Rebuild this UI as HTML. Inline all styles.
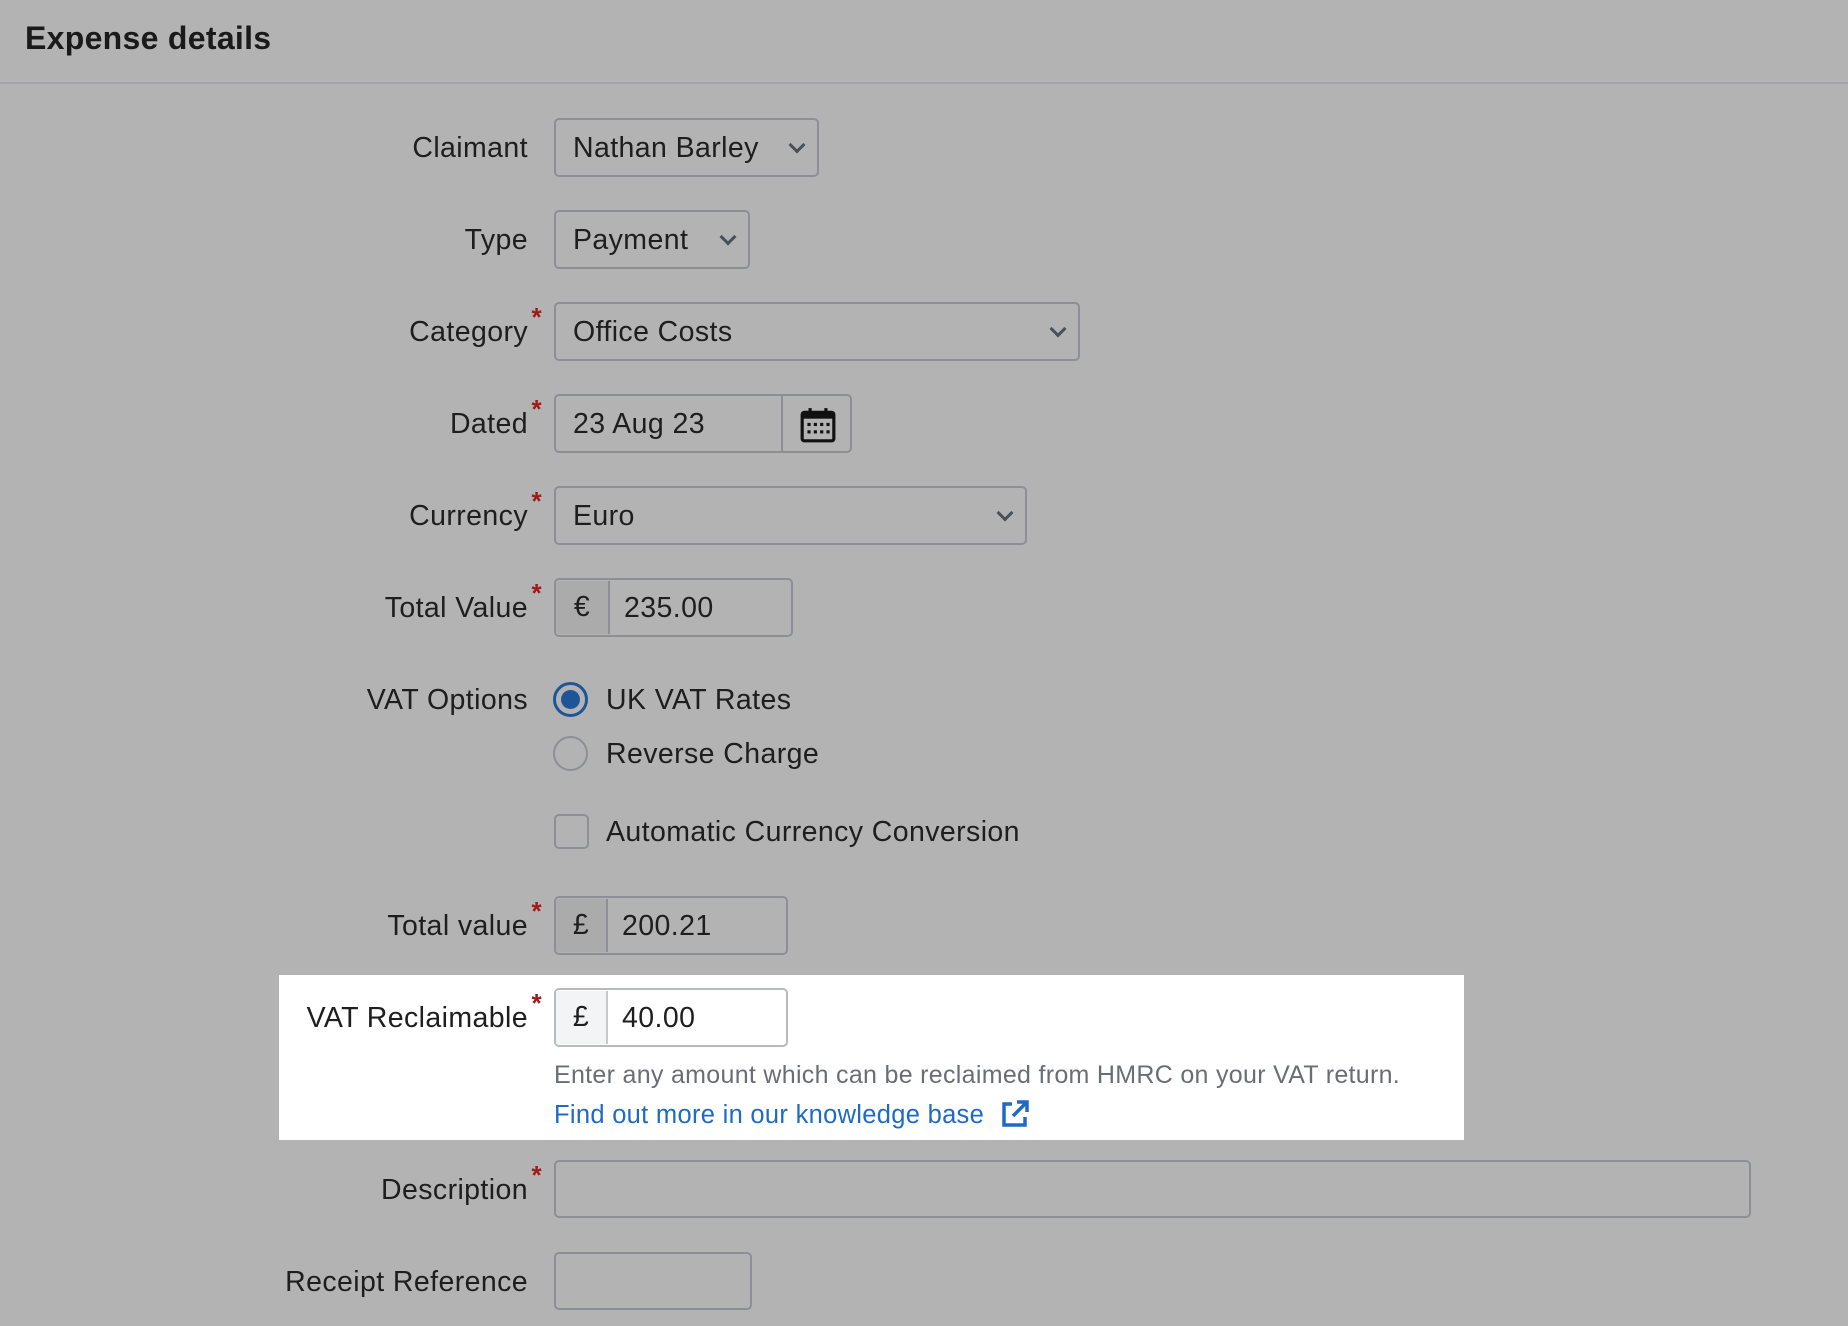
<!DOCTYPE html>
<html><head><meta charset="utf-8"><style>
*{box-sizing:border-box;margin:0;padding:0}
body{width:1848px;height:1326px;background:#b3b3b3;font-family:"Liberation Sans",sans-serif;color:#1e1e1e;position:relative;overflow:hidden}
.hdr{position:absolute;left:25px;top:20px;font-size:32px;font-weight:bold;color:#1a1a1a;letter-spacing:0.3px}
.line{position:absolute;left:0;top:82px;width:1848px;height:2px;background:#a2a4a8}
.lbl{position:absolute;right:1320px;font-size:28.5px;letter-spacing:0.4px;color:#1e1e1e;white-space:nowrap}
.req::after{content:"*";position:absolute;right:-14px;top:-14px;color:#a01a1a;font-size:26px;font-weight:bold}
.box{position:absolute;left:554px;border:2px solid #8c8f93;border-radius:5px;font-size:28.5px;letter-spacing:0.4px;display:flex;align-items:center;padding-left:17px;padding-top:2px}
.chev{position:absolute;right:14px;top:50%;width:12px;height:12px;border-right:3px solid #4a5058;border-bottom:3px solid #4a5058;transform:translateY(-75%) rotate(45deg)}
.pre{width:54px;height:100%;display:flex;align-items:center;justify-content:center;border-right:2px solid #8c8f93;background:#ababab;margin-left:-17px;margin-right:14px;margin-top:-2px}
.t{position:absolute;font-size:28.5px;letter-spacing:0.4px;white-space:nowrap}
.panel{position:absolute;left:279px;top:975px;width:1185px;height:165px;background:#fff}
</style></head><body>
<div class="hdr">Expense details</div>
<div class="line"></div>

<div class="lbl" style="top:132px">Claimant</div>
<div class="box" style="top:118px;width:265px;height:59px">Nathan Barley<span class="chev"></span></div>

<div class="lbl" style="top:224px">Type</div>
<div class="box" style="top:210px;width:196px;height:59px">Payment<span class="chev"></span></div>

<div class="lbl req" style="top:316px">Category</div>
<div class="box" style="top:302px;width:526px;height:59px">Office Costs<span class="chev"></span></div>

<div class="lbl req" style="top:408px">Dated</div>
<div class="box" style="top:394px;width:298px;height:59px">23 Aug 23
<div style="position:absolute;left:225px;top:0;bottom:0;width:2px;background:#8c8f93"></div>
<svg style="position:absolute;left:243px;top:10px" width="38" height="38" viewBox="0 0 36 36"><rect x="3" y="6" width="30" height="27" rx="2" fill="none" stroke="#111" stroke-width="3"/><rect x="3" y="6" width="30" height="6" fill="#111"/><rect x="9" y="2" width="3" height="7" fill="#111"/><rect x="24" y="2" width="3" height="7" fill="#111"/><g fill="#111"><rect x="8" y="16" width="3" height="3"/><rect x="14" y="16" width="3" height="3"/><rect x="20" y="16" width="3" height="3"/><rect x="26" y="16" width="3" height="3"/><rect x="8" y="23" width="3" height="3"/><rect x="14" y="23" width="3" height="3"/><rect x="20" y="23" width="3" height="3"/><rect x="26" y="23" width="3" height="3"/></g></svg>
</div>

<div class="lbl req" style="top:500px">Currency</div>
<div class="box" style="top:486px;width:473px;height:59px">Euro<span class="chev"></span></div>

<div class="lbl req" style="top:592px">Total Value</div>
<div class="box" style="top:578px;width:239px;height:59px"><div class="pre">€</div>235.00</div>

<div class="lbl" style="top:684px">VAT Options</div>
<div style="position:absolute;left:553px;top:682px;width:35px;height:35px;border-radius:50%;border:3px solid #1d5596;background:#b3b3b3"><div style="position:absolute;left:5px;top:5px;width:19px;height:19px;border-radius:50%;background:#1d5596"></div></div>
<div class="t" style="left:606px;top:684px">UK VAT Rates</div>
<div style="position:absolute;left:553px;top:736px;width:35px;height:35px;border-radius:50%;border:2px solid #8c8f93"></div>
<div class="t" style="left:606px;top:738px">Reverse Charge</div>
<div style="position:absolute;left:554px;top:814px;width:35px;height:35px;border-radius:5px;border:2px solid #8c8f93"></div>
<div class="t" style="left:606px;top:816px">Automatic Currency Conversion</div>

<div class="lbl req" style="top:910px">Total value</div>
<div class="box" style="top:896px;width:234px;height:59px"><div class="pre" style="width:52px">£</div>200.21</div>

<div class="panel"></div>
<div class="lbl req" style="top:1002px">VAT Reclaimable</div>
<div class="box" style="top:988px;width:234px;height:59px;background:#fff;border-color:#b7babe"><div class="pre" style="width:52px;background:#f3f4f6;border-color:#c6c8cc">£</div>40.00</div>
<div class="t" style="left:554px;top:1061px;font-size:25px;letter-spacing:0.3px;color:#6a6e74">Enter any amount which can be reclaimed from HMRC on your VAT return.</div>
<div class="t" style="left:554px;top:1101px;font-size:25.5px;letter-spacing:0.3px;color:#1f6ac4">Find out more in our knowledge base</div>
<svg style="position:absolute;left:1000px;top:1099px" width="30" height="30" viewBox="0 0 30 30"><path d="M12 5H4v21h21v-8" fill="none" stroke="#1f6ac4" stroke-width="3.5"/><path d="M13 17L26 4M17 3h10v10" fill="none" stroke="#1f6ac4" stroke-width="3.5"/></svg>

<div class="lbl req" style="top:1174px">Description</div>
<div class="box" style="top:1160px;width:1197px;height:58px"></div>

<div class="lbl" style="top:1266px">Receipt Reference</div>
<div class="box" style="top:1252px;width:198px;height:58px"></div>
</body></html>
